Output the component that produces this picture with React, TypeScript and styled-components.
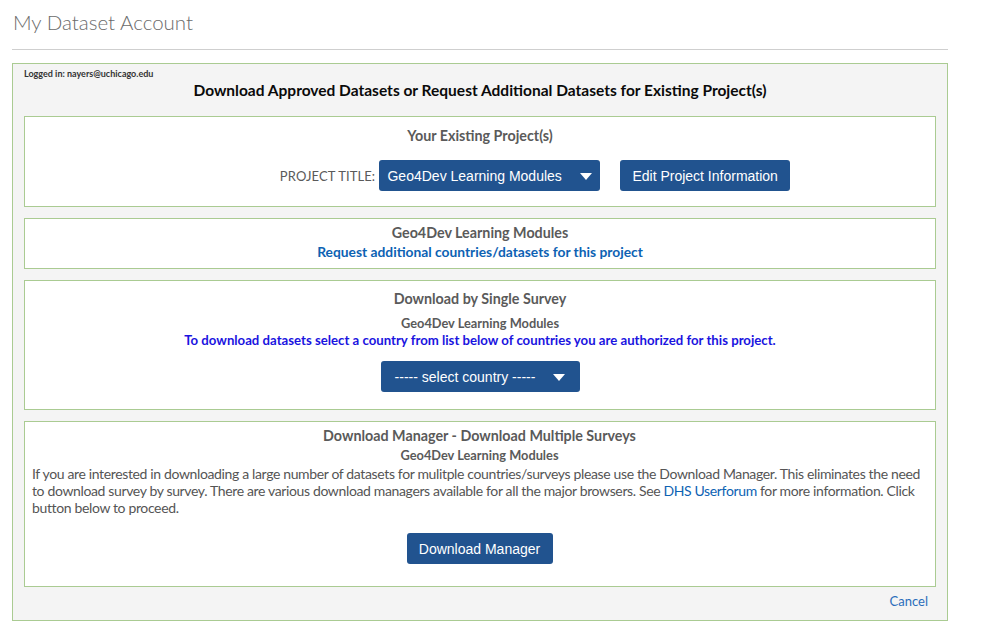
import React from 'react';
import styled, { createGlobalStyle } from 'styled-components';

const GlobalStyle = createGlobalStyle`
    body {
        margin: 0;
        background: #ffffff;
        font-family: Lato, "Noto Sans", sans-serif;
        color: #5a5a5a;
    }
`;

const Page = styled.div`
    width: 936px;
    padding: 8px 0 0 12px;
`;

const Title = styled.h1`
    margin: 0;
    padding-left: 1px;
    font-size: 20.5px;
    font-weight: 300;
    line-height: 28px;
    color: #6b6b6b;
`;

const Rule = styled.hr`
    margin: 13px 0 13px 0;
    border: 0;
    border-top: 1px solid #cfcfcf;
`;

const Panel = styled.div`
    border: 1px solid #aacb92;
    background: #f4f4f4;
    padding: 4px 11px 10px 11px;
    display: flex;
    flex-direction: column;
`;

const LoggedIn = styled.div`
    font-size: 9px;
    font-weight: 700;
    color: #333;
    line-height: 12px;
`;

const Heading = styled.div`
    text-align: center;
    font-size: 15.5px;
    font-weight: 700;
    color: #0a0a0a;
    line-height: 20px;
    margin: 0 0 16px 0;
`;

const Box = styled.div<{ $pad?: string; $align?: string }>`
    background: #fff;
    border: 1px solid #aacb92;
    padding: ${({ $pad }) => $pad || '8px'};
    margin-bottom: 11px;
    text-align: ${({ $align }) => $align || 'center'};
`;

const BoxTitle = styled.div`
    font-size: 14.3px;
    font-weight: 700;
    color: #5a5a5a;
    line-height: 20px;
    text-align: center;
`;

const SubTitle = styled.div<{ $top?: number }>`
    font-size: 12.8px;
    font-weight: 700;
    color: #5a5a5a;
    line-height: 18px;
    text-align: center;
    margin-top: ${({ $top }) => $top || 0}px;
`;

const Link = styled.a<{ $bold?: boolean }>`
    color: #0d62b3;
    font-weight: ${({ $bold }) => ($bold ? 700 : 400)};
    text-decoration: none;
`;

const BlockLink = styled(Link)`
    display: block;
    font-size: 13.8px;
    line-height: 17px;
`;

const Notice = styled.div`
    font-size: 13.2px;
    font-weight: 700;
    color: #1a14e0;
    line-height: 17px;
`;

const ProjectRow = styled.div`
    display: flex;
    justify-content: center;
    align-items: center;
    gap: 20px;
    margin-top: 14px;
    margin-left: 110px;
`;

const Label = styled.span`
    font-size: 13px;
    color: #5a5a5a;
    margin-right: -16px;
    letter-spacing: 0.1px;
`;

const Button = styled.button<{ $w?: number }>`
    font-family: "Liberation Sans", Arial, sans-serif;
    font-size: 14px;
    white-space: nowrap;
    color: #fff;
    background: #21538f;
    border: 0;
    border-radius: 3px;
    height: 31px;
    padding: 0 8px;
    display: inline-flex;
    align-items: center;
    justify-content: center;
    gap: 18px;
    width: ${({ $w }) => ($w ? `${$w}px` : 'auto')};
`;

const Caret = styled.span`
    width: 0;
    height: 0;
    border-left: 6px solid transparent;
    border-right: 6px solid transparent;
    border-top: 7px solid #fff;
    margin-top: 2px;
`;

const Paragraph = styled.p`
    margin: 1px 0 0 0;
    font-size: 14px;
    line-height: 17px;
    color: #555;
    letter-spacing: -0.36px;
`;

const Centered = styled.div<{ $top: number }>`
    display: flex;
    justify-content: center;
    margin-top: ${({ $top }) => $top}px;
`;

const Footer = styled.div`
    display: flex;
    justify-content: flex-end;
    font-size: 13px;
    line-height: 18px;
    margin-top: -6px;
    padding-right: 8px;
`;

function App() {
    return (
        <Page>
            <GlobalStyle />
            <Title>My Dataset Account</Title>
            <Rule />
            <Panel>
                <LoggedIn>Logged in: nayers@uchicago.edu</LoggedIn>
                <Heading>Download Approved Datasets or Request Additional Datasets for Existing Project(s)</Heading>

                <Box $pad="9px 8px 15px 8px">
                    <BoxTitle>Your Existing Project(s)</BoxTitle>
                    <ProjectRow>
                        <Label>PROJECT TITLE:</Label>
                        <Button $w={221}>
                            Geo4Dev Learning Modules <Caret />
                        </Button>
                        <Button $w={170}>Edit Project Information</Button>
                    </ProjectRow>
                </Box>

                <Box $pad="4px 8px 8px 8px">
                    <BoxTitle>Geo4Dev Learning Modules</BoxTitle>
                    <BlockLink $bold href="#">Request additional countries/datasets for this project</BlockLink>
                </Box>

                <Box $pad="8px 8px 17px 8px">
                    <BoxTitle>Download by Single Survey</BoxTitle>
                    <SubTitle $top={5}>Geo4Dev Learning Modules</SubTitle>
                    <Notice>To download datasets select a country from list below of countries you are authorized for this project.</Notice>
                    <Centered $top={12}>
                        <Button $w={199}>
                            ----- select country ----- <Caret />
                        </Button>
                    </Centered>
                </Box>

                <Box $pad="4px 8px 22px 7px" $align="left">
                    <BoxTitle>Download Manager - Download Multiple Surveys</BoxTitle>
                    <SubTitle>Geo4Dev Learning Modules</SubTitle>
                    <Paragraph>
                        If you are interested in downloading a large number of datasets for mulitple countries/surveys please use
                        the Download Manager. This eliminates the need to download survey by survey. There are various download
                        managers available for all the major browsers. See <Link href="#">DHS Userforum</Link> for more
                        information. Click button below to proceed.
                    </Paragraph>
                    <Centered $top={17}>
                        <Button $w={146}>Download Manager</Button>
                    </Centered>
                </Box>

                <Footer>
                    <Link href="#" style={{ color: '#2a6dbb' }}>Cancel</Link>
                </Footer>
            </Panel>
        </Page>
    );
}

export default App;
